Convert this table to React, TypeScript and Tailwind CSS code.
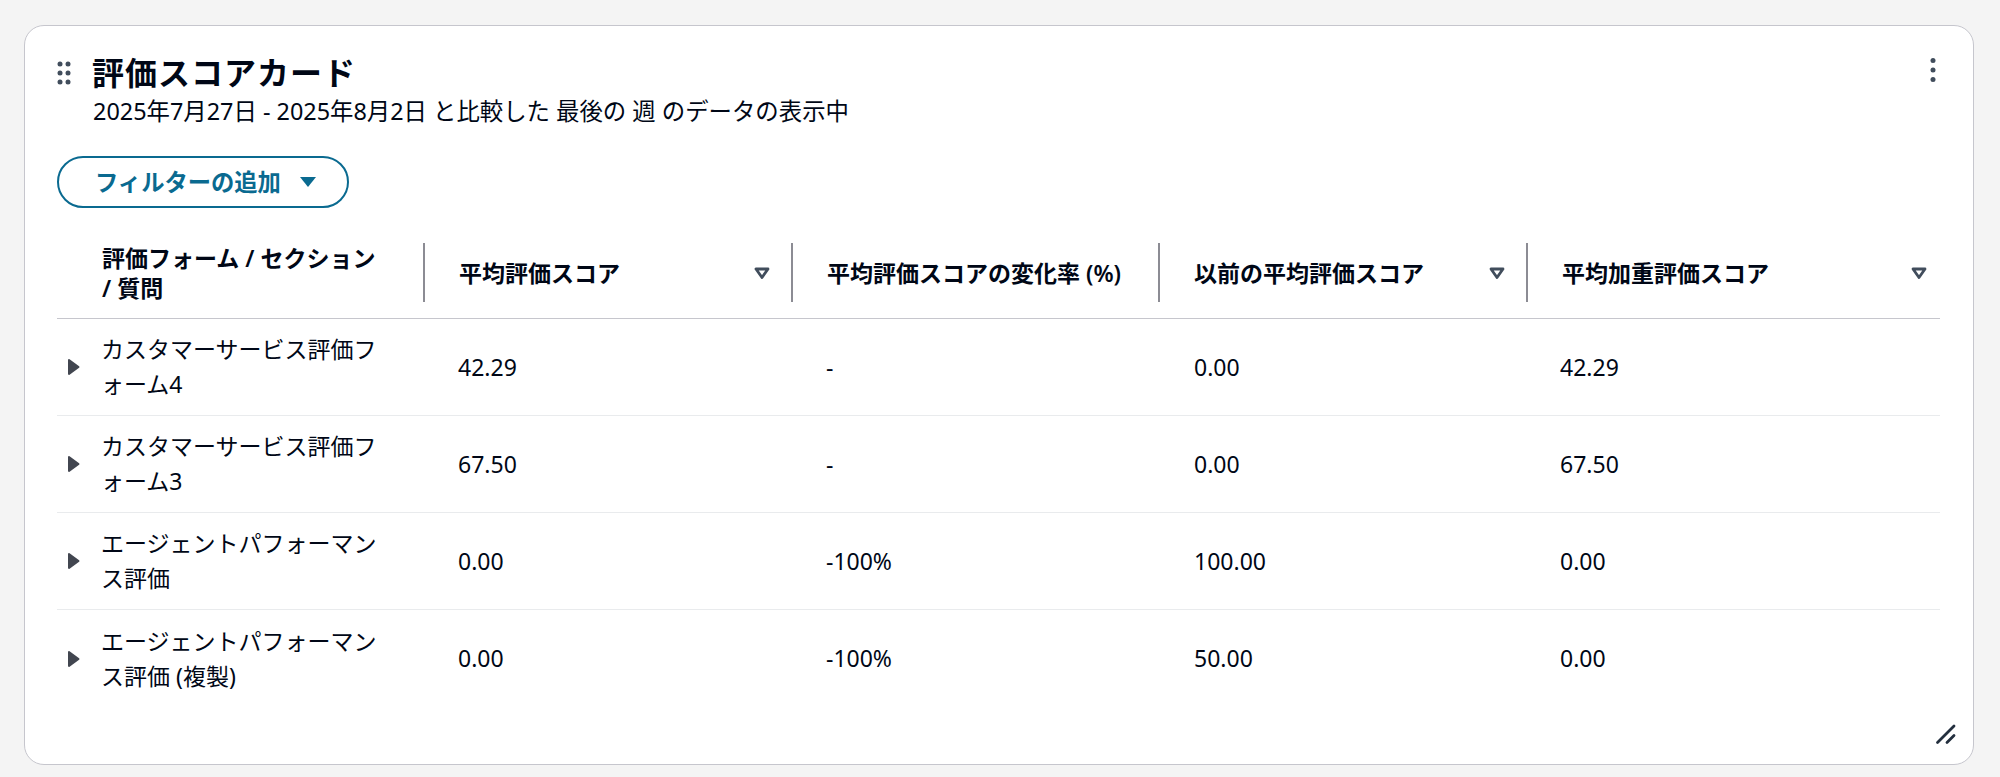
import React from "react";

const rows = [
  { name: "カスタマーサービス評価フォーム4", avg: "42.29", change: "-", prev: "0.00", weighted: "42.29" },
  { name: "カスタマーサービス評価フォーム3", avg: "67.50", change: "-", prev: "0.00", weighted: "67.50" },
  { name: "エージェントパフォーマンス評価", avg: "0.00", change: "-100%", prev: "100.00", weighted: "0.00" },
  { name: "エージェントパフォーマンス評価 (複製)", avg: "0.00", change: "-100%", prev: "50.00", weighted: "0.00" },
];

const SortIcon = () => (
  <svg width="18" height="14" viewBox="0 0 18 14" className="shrink-0">
    <path d="M3 3h12L9 11.5z" fill="none" stroke="#414d5c" strokeWidth="2.8" strokeLinejoin="round" />
  </svg>
);

const ExpandIcon = () => (
  <svg width="15" height="20" viewBox="0 0 15 20" className="shrink-0">
    <path d="M3 3L12.5 10L3 17z" fill="#424650" stroke="#424650" strokeWidth="2" strokeLinejoin="round" />
  </svg>
);

const DragHandle = () => (
  <svg width="14" height="24" viewBox="0 0 14 24" className="shrink-0">
    {[3, 12, 21].map((y) =>
      [3, 11].map((x) => <circle key={`${x}-${y}`} cx={x} cy={y} r="2.5" fill="#414d5c" />)
    )}
  </svg>
);

const Kebab = () => (
  <svg width="8" height="26" viewBox="0 0 8 26" className="shrink-0">
    <circle cx="4" cy="3.5" r="2.5" fill="#414d5c" />
    <circle cx="4" cy="13" r="2.5" fill="#414d5c" />
    <circle cx="4" cy="22.5" r="2.5" fill="#414d5c" />
  </svg>
);

const HeaderCell = ({ label, sortable, last }: { label: string; sortable?: boolean; last?: boolean }) => (
  <div className={`flex items-center ${last ? "pr-[12px]" : "pr-[20px]"}`}>
    <div className="h-[59px] w-[2px] shrink-0 bg-[#8c8c94]" />
    <span className="ml-[34px] flex-1">{label}</span>
    {sortable && <SortIcon />}
  </div>
);

export default function App() {
  return (
    <div className="h-[777px] w-full overflow-hidden bg-[#f4f4f4] pl-[24px] pt-[25px] font-['Noto_Sans','Noto_Sans_CJK_JP',sans-serif] text-[#000716]">
      <div className="relative h-[740px] w-[1950px] rounded-[20px] border border-[#c6c6cd] bg-white pl-[32px] pr-[33px] pt-[26px]">
        <div className="flex items-start justify-between">
          <div className="flex h-[42px] items-center gap-[21px]">
            <DragHandle />
            <h2 className="text-[32px] font-bold leading-[42px] tracking-[1px]">評価スコアカード</h2>
          </div>
          <div className="mr-[3px] mt-[5px]">
            <Kebab />
          </div>
        </div>
        <p className="mt-[1px] pl-[36px] text-[23.4px] leading-[32px]">
          2025年7月27日 - 2025年8月2日 と比較した 最後の 週 のデータの表示中
        </p>

        <button className="mt-[29px] flex h-[52px] w-[292px] items-center gap-[18px] rounded-full border-2 border-[#0a6a90] pl-[36px] text-[23.3px] font-bold text-[#0a6a90]">
          <span>フィルターの追加</span>
          <svg width="18" height="12" viewBox="0 0 18 12">
            <path d="M1 1h16L9 11z" fill="#0a6a90" />
          </svg>
        </button>

        <div className="mt-[19px] text-[23px]">
          <div className="grid h-[92px] grid-cols-[366px_368px_367px_368px_1fr] border-b border-[#c6c6cd] font-semibold leading-[30px] text-[#000716]">
            <div className="flex items-center pl-[45px]">
              <span className="w-[290px]">
                評価フォーム / セクション <span className="whitespace-nowrap">/ 質問</span>
              </span>
            </div>
            <HeaderCell label="平均評価スコア" sortable />
            <HeaderCell label="平均評価スコアの変化率 (%)" />
            <HeaderCell label="以前の平均評価スコア" sortable />
            <HeaderCell label="平均加重評価スコア" sortable last />
          </div>

          {rows.map((row, i) => (
            <div
              key={row.name}
              className={`grid h-[97px] grid-cols-[366px_368px_367px_368px_1fr] leading-[35px] ${
                i < rows.length - 1 ? "border-b border-[#e9ebed]" : ""
              }`}
            >
              <div className="flex items-center gap-[20px] pl-[9px]">
                <ExpandIcon />
                <span className="w-[290px]">{row.name}</span>
              </div>
              <div className="flex items-center pl-[35px]">{row.avg}</div>
              <div className="flex items-center pl-[35px]">{row.change}</div>
              <div className="flex items-center pl-[36px]">{row.prev}</div>
              <div className="flex items-center pl-[34px]">{row.weighted}</div>
            </div>
          ))}
        </div>

        <svg width="22" height="22" viewBox="0 0 22 22" className="absolute bottom-[19px] right-[16px]">
          <path d="M2.5 19.5L19 3M12 19.5l7-7" stroke="#232f3e" strokeWidth="2.8" strokeLinecap="round" />
        </svg>
      </div>
    </div>
  );
}
